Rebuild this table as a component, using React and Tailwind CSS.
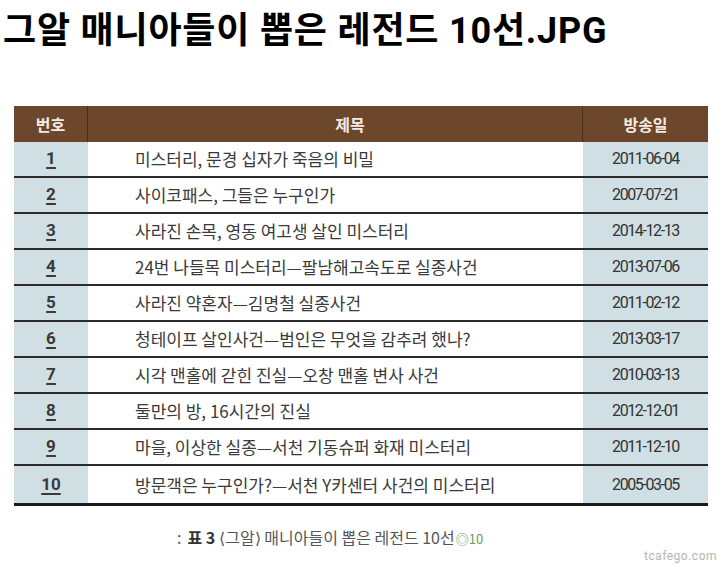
import React from "react";

const rows = [
  ["1", "미스터리, 문경 십자가 죽음의 비밀", "2011-06-04"],
  ["2", "사이코패스, 그들은 누구인가", "2007-07-21"],
  ["3", "사라진 손목, 영동 여고생 살인 미스터리", "2014-12-13"],
  ["4", "24번 나들목 미스터리—팔남해고속도로 실종사건", "2013-07-06"],
  ["5", "사라진 약혼자—김명철 실종사건", "2011-02-12"],
  ["6", "청테이프 살인사건—범인은 무엇을 감추려 했나?", "2013-03-17"],
  ["7", "시각 맨홀에 갇힌 진실—오창 맨홀 변사 사건", "2010-03-13"],
  ["8", "둘만의 방, 16시간의 진실", "2012-12-01"],
  ["9", "마을, 이상한 실종—서천 기동슈퍼 화재 미스터리", "2011-12-10"],
  ["10", "방문객은 누구인가?—서천 Y카센터 사건의 미스터리", "2005-03-05"],
];

export default function App() {
  return (
    <div className="w-[720px] h-[567px] bg-white relative overflow-hidden font-['Noto_Sans_CJK_KR',sans-serif]">
      <h1 className="pl-[3px] pt-[10px] text-[36px] leading-[42px] font-bold text-black tracking-[0.8px] font-['Roboto','Noto_Sans_CJK_KR',sans-serif]">
        그알 매니아들이 뽑은 레전드 10선.JPG
      </h1>
      <div className="mt-[54px] ml-[14px] w-[694px]">
        <div className="flex h-[36px] bg-[#6d472b] text-[#f3ebe2] font-bold text-[16px]">
          <div className="w-[74px] flex items-center justify-center border-r border-[#4a2e1a]">번호</div>
          <div className="w-[495px] flex items-center justify-center pl-[30px] border-r border-[#4a2e1a]">제목</div>
          <div className="flex-1 flex items-center justify-center">방송일</div>
        </div>
        {rows.map((r, i) => (
          <div
            key={i}
            className={
              "flex " +
              (i === rows.length - 1
                ? "h-[40px] border-b-[3px] border-[#1a1a1a]"
                : "h-[36px] border-b-2 border-[#2a2a2a]")
            }
          >
            <div className="w-[74px] bg-[#cfdfe3] flex items-center justify-center">
              <span className="text-[17px] font-bold text-[#3a3a3a] underline decoration-2 underline-offset-[3px] font-['Roboto',sans-serif]">
                {r[0]}
              </span>
            </div>
            <div className="w-[495px] flex items-center pl-[47px] text-[17px] text-[#3a3a3a] tracking-[0px]">
              {r[1]}
            </div>
            <div className="flex-1 bg-[#cfdfe3] flex items-center justify-center text-[16px] text-[#333] tracking-[-1.4px] font-['Roboto',sans-serif]">
              {r[2]}
            </div>
          </div>
        ))}
      </div>
      <div className="mt-[19px] ml-[177px] flex items-baseline text-[16px] text-[#555]">
        <span>:</span>
        <span className="font-bold text-[#333] ml-[6px]">표 3</span>
        <span className="ml-[4px]">⟨그알⟩ 매니아들이 뽑은 레전드 10선</span>
        <span className="text-[#6a9a5a] text-[13px] ml-[1px]">◎10</span>
      </div>
      <div className="absolute right-[3px] bottom-[2px] text-[12px] text-[#b5b5b5] font-['Roboto',sans-serif] tracking-[0.5px]">
        tcafego.com
      </div>
    </div>
  );
}
